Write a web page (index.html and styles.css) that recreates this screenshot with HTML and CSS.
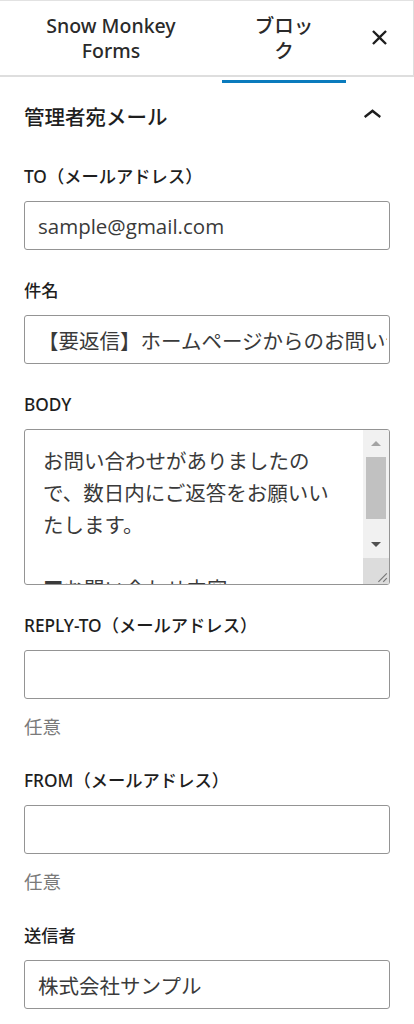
FILE: index.html
```html
<!DOCTYPE html>
<html lang="ja">
<head>
    <meta charset="UTF-8">
    <meta name="viewport" content="width=device-width, initial-scale=1.0">
    <title>Snow Monkey Forms - Block settings</title>
    <link rel="stylesheet" href="styles.css">
</head>
<body>
    <div class="sidebar">
        <div class="tabs">
            <button class="tab">Snow Monkey<br>Forms</button>
            <button class="tab tab-active">ブロッ<br>ク</button>
            <button class="close-btn" aria-label="閉じる">
                <svg viewBox="0 0 24 24" width="37" height="37"><path d="M12 13.06l3.712 3.713 1.061-1.06L13.061 12l3.713-3.712-1.06-1.06L12 10.938 8.288 7.227l-1.061 1.06L10.939 12l-3.712 3.712 1.06 1.061L12 13.061z"/></svg>
            </button>
        </div>

        <div class="panel">
            <div class="panel-title">
                <h2>管理者宛メール</h2>
                <svg class="chevron" viewBox="0 0 24 24" width="37" height="37"><path d="M6.5 12.4L12 8l5.5 4.4-.9 1.2L12 10l-4.6 3.6-1-1.2z"/></svg>
            </div>

            <div class="field">
                <label class="field-label">TO（メールアドレス）</label>
                <input class="field-input" type="text" value="sample@gmail.com">
            </div>

            <div class="field">
                <label class="field-label">件名</label>
                <input class="field-input" type="text" value="【要返信】ホームページからのお問い合わせ">
            </div>

            <div class="field">
                <label class="field-label">BODY</label>
                <div class="field-textarea">
                    <div class="textarea-text">お問い合わせがありましたの<br>で、数日内にご返答をお願いい<br>たします。<br><br>■お問い合わせ内容</div>
                    <div class="scrollbar">
                        <span class="scroll-btn"><i class="arrow-up"></i></span>
                        <span class="scroll-thumb"></span>
                        <span class="scroll-track"></span>
                        <span class="scroll-btn"><i class="arrow-down"></i></span>
                        <span class="scroll-corner">
                            <svg viewBox="0 0 10 10" width="12" height="12"><path d="M9 2L2 9M9 6L6 9" stroke="#777" stroke-width="1"/></svg>
                        </span>
                    </div>
                </div>
            </div>

            <div class="field">
                <label class="field-label">REPLY-TO（メールアドレス）</label>
                <input class="field-input" type="text" value="">
                <p class="field-help">任意</p>
            </div>

            <div class="field">
                <label class="field-label">FROM（メールアドレス）</label>
                <input class="field-input" type="text" value="">
                <p class="field-help">任意</p>
            </div>

            <div class="field">
                <label class="field-label">送信者</label>
                <input class="field-input" type="text" value="株式会社サンプル">
            </div>
        </div>
    </div>
</body>
</html>
```

FILE: styles.css
```css
body {
    margin: 0;
    background: #fff;
    color: #1e1e1e;
    font-family: "Open Sans", "Noto Sans CJK JP", sans-serif;
}

.sidebar {
    width: 414px;
}

/* tab bar */
.tabs {
    display: flex;
    height: 74px;
    border-top: 1px solid #e2e2e2;
    border-bottom: 2px solid #dedede;
    border-right: 1px solid #dedede;
}
.tab {
    position: relative;
    width: 222px;
    padding: 0;
    border: none;
    background: none;
    font-family: "Noto Sans", "Noto Sans CJK JP", sans-serif;
    font-size: 19.5px;
    font-weight: 500;
    line-height: 25px;
    color: #2a2a2a;
    text-align: center;
}
.tab-active {
    width: 124px;
}
.tab-active::after {
    content: "";
    position: absolute;
    left: 0;
    right: 0;
    bottom: -8px;
    height: 3px;
    background: #0a7bbd;
}
.close-btn {
    flex: 1;
    display: flex;
    align-items: center;
    justify-content: center;
    padding: 0 0 2px 0;
    border: none;
    background: none;
}
.close-btn svg {
    fill: #1e1e1e;
}

/* panel */
.panel {
    padding: 26px 24px 0;
}
.panel-title {
    display: flex;
    align-items: center;
    justify-content: space-between;
    height: 28px;
    margin-bottom: 34px;
}
.panel-title h2 {
    margin: 0;
    font-size: 20.5px;
    font-weight: 500;
    line-height: 28px;
}
.chevron {
    margin: -4px -1px 0 0;
    fill: #1e1e1e;
}

.field {
    margin-bottom: 29px;
}
.field-label {
    display: block;
    margin-bottom: 12px;
    font-family: "Noto Sans", "Noto Sans CJK JP", sans-serif;
    font-size: 17.3px;
    font-weight: 500;
    line-height: 24px;
}
.field-input {
    display: block;
    box-sizing: border-box;
    width: 100%;
    height: 49px;
    margin: 0;
    padding: 0 2px 0 13px;
    border: 1px solid #949494;
    border-radius: 3px;
    font-family: inherit;
    font-size: 20.5px;
    color: #3a3a3a;
    background: #fff;
}
.field-help {
    margin: 15px 0 0;
    font-size: 18.5px;
    line-height: 26px;
    color: #7a7a7a;
}

/* textarea with its scrollbar */
.field-textarea {
    display: flex;
    box-sizing: border-box;
    height: 156px;
    border: 1px solid #949494;
    border-radius: 3px;
    overflow: hidden;
}
.textarea-text {
    flex: 1;
    padding: 15px 0 0 18px;
    font-size: 20.5px;
    line-height: 32px;
    color: #3a3a3a;
    overflow: hidden;
}
.scrollbar {
    display: flex;
    flex-direction: column;
    width: 26px;
    background: #f1f1f1;
}
.scroll-btn {
    display: flex;
    align-items: center;
    justify-content: center;
    height: 27px;
}
.arrow-up,
.arrow-down {
    width: 0;
    height: 0;
    border-left: 5px solid transparent;
    border-right: 5px solid transparent;
}
.arrow-up {
    border-bottom: 5px solid #a3a3a3;
}
.arrow-down {
    border-top: 5px solid #505050;
}
.scroll-thumb {
    height: 62px;
    margin: 0 3px;
    background: #c1c1c1;
}
.scroll-track {
    flex: 1;
}
.scroll-corner {
    display: flex;
    align-items: flex-end;
    justify-content: flex-end;
    height: 26px;
    background: #dcdcdc;
}
.scroll-corner svg {
    margin: 0 1px 1px 0;
}
```
